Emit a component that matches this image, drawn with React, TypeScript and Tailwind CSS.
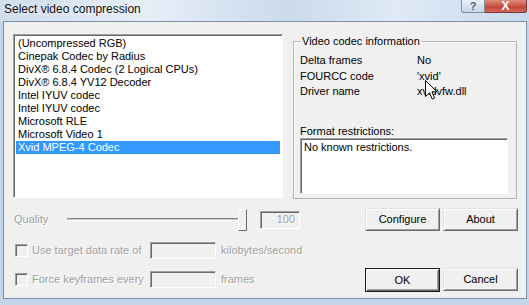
import React from 'react';

const codecs = [
  '(Uncompressed RGB)',
  'Cinepak Codec by Radius',
  'DivX® 6.8.4 Codec (2 Logical CPUs)',
  'DivX® 6.8.4 YV12 Decoder',
  'Intel IYUV codec',
  'Intel IYUV codec',
  'Microsoft RLE',
  'Microsoft Video 1',
  'Xvid MPEG-4 Codec',
];

const info = [
  ['Delta frames', 'No'],
  ['FOURCC code', "'xvid'"],
  ['Driver name', 'xvidvfw.dll'],
];

// classic sunken edit border
const sunken =
  'border border-t-[#a0a0a0] border-l-[#a0a0a0] border-r-white border-b-white shadow-[inset_1px_1px_0_#696969]';
const disabledText = 'text-[#a0a0a0] [text-shadow:1px_1px_0_#fff]';

function Button({ label, isDefault }: { label: string; isDefault?: boolean }) {
  return (
    <div
      className={
        isDefault
          ? 'w-[75px] h-[24px] flex items-center justify-center bg-[#f0f0f0] border border-[#1a1a1a] shadow-[inset_1px_1px_0_#fff,inset_-1px_-1px_0_#696969,inset_-2px_-2px_0_#a0a0a0]'
          : 'w-[75px] h-[23px] flex items-center justify-center bg-[#f0f0f0] border border-t-[#e3e3e3] border-l-[#e3e3e3] border-r-[#696969] border-b-[#696969] shadow-[inset_1px_1px_0_#fff,inset_-1px_-1px_0_#a0a0a0]'
      }
    >
      {label}
    </div>
  );
}

function Checkbox() {
  return (
    <div className="w-[13px] h-[13px] shrink-0 bg-[#f0f0f0] border border-t-[#a0a0a0] border-l-[#a0a0a0] border-r-white border-b-white shadow-[inset_1px_1px_0_#696969]"></div>
  );
}

export default function App() {
  return (
    <div className="relative w-[529px] h-[305px] overflow-hidden bg-[#c5d6ea] text-[11px] text-black font-['Liberation_Sans',Arial,sans-serif]">
      {/* title bar */}
      <div className="h-[21px] flex items-start justify-between pr-[2px] bg-[linear-gradient(90deg,#cfdcea,#e6eef8_28%,#cbdaec_55%,#e0eaf6_75%,#c8d8eb)]">
        <div className="pl-[4px] pt-[1px] text-[12px] leading-[17px] text-[#111] [text-shadow:0_0_6px_#fff]">
          Select video compression
        </div>
        <div className="flex">
          <div className="w-[24px] h-[13px] flex items-center justify-center rounded-bl-[3px] border border-t-0 border-[#7d8ea3] bg-[linear-gradient(#e9f0f8,#c9d6e6)] text-[#50627a] text-[11px] font-bold leading-none">
            ?
          </div>
          <div className="w-[42px] h-[13px] flex items-center justify-center rounded-br-[3px] border border-t-0 border-l-0 border-[#7a3a33] bg-[linear-gradient(#e08a7c,#c4483a_60%,#d0695a)] text-white text-[12px] font-bold leading-none">
            X
          </div>
        </div>
      </div>

      {/* client area */}
      <div className="ml-[3px] w-[524px] h-[278px] border border-[#7d90a8] bg-[#f0f0f0] overflow-hidden">
        <div className="mt-[12px] pl-[9px] flex items-start gap-[10px]">
          <div className={`w-[270px] h-[164px] bg-white pt-[2px] px-[2px] ${sunken}`}>
            {codecs.map((c, i) => (
              <div
                key={i}
                className={
                  i === codecs.length - 1
                    ? 'h-[13px] leading-[13px] pl-[2px] bg-[#3399ff] text-white whitespace-nowrap'
                    : 'h-[13px] leading-[13px] pl-[2px] whitespace-nowrap'
                }
              >
                {c}
              </div>
            ))}
          </div>

          <fieldset className="mt-[1px] w-[224px] h-[164px] border border-[#b4b4b4] shadow-[inset_1px_1px_0_#fff]">
            <legend className="ml-[7px] px-[1px] leading-[13px]">Video codec information</legend>
            <div className="pl-[6px] mt-[5px]">
              {info.map(([k, v]) => (
                <div key={k} className="flex leading-[15.5px]">
                  <div className="w-[117px]">{k}</div>
                  <div>{v}</div>
                </div>
              ))}
              <div className="mt-[25px] leading-[13px]">Format restrictions:</div>
              <div className={`w-[208px] h-[56px] bg-white pl-[3px] pt-[2px] leading-[13px] ${sunken}`}>
                No known restrictions.
              </div>
            </div>
          </fieldset>
        </div>

        {/* quality row */}
        <div className="mt-[9px] pl-[10px] flex items-center h-[23px]">
          <div className={`w-[53px] ${disabledText}`}>Quality</div>
          <div className="w-[180px] h-[23px] flex items-center">
            <div className="flex-1 h-[3px] border-t border-t-[#808080] border-b border-b-white bg-[#c8c8c8]"></div>
            <div className="w-[9px] h-[22px] bg-[#f0f0f0] border border-t-white border-l-white border-r-[#696969] border-b-[#696969]"></div>
          </div>
          <div className={`ml-[13px] w-[40px] h-[18px] bg-[#f0f0f0] flex items-center justify-end pr-[4px] ${sunken} ${disabledText}`}>
            100
          </div>
          <div className="ml-[65px] flex gap-[3px]">
            <Button label="Configure" />
            <Button label="About" />
          </div>
        </div>

        {/* options + dialog buttons */}
        <div className="mt-[11px] pl-[11px] flex items-start">
          <div className="w-[350px]">
            <div className="flex items-center h-[17px]">
              <Checkbox />
              <div className={`ml-[4px] w-[118px] ${disabledText}`}>Use target data rate of</div>
              <div className={`w-[66px] h-[17px] bg-[#f0f0f0] ${sunken}`}></div>
              <div className={`ml-[5px] ${disabledText}`}>kilobytes/second</div>
            </div>
            <div className="mt-[12px] flex items-center h-[17px]">
              <Checkbox />
              <div className={`ml-[4px] w-[118px] ${disabledText}`}>Force keyframes every</div>
              <div className={`w-[66px] h-[17px] bg-[#f0f0f0] ${sunken}`}></div>
              <div className={`ml-[5px] ${disabledText}`}>frames</div>
            </div>
          </div>
          <div className="mt-[26px] flex gap-[3px]">
            <Button label="OK" isDefault />
            <Button label="Cancel" />
          </div>
        </div>
      </div>

      {/* mouse pointer over the dialog */}
      <svg className="absolute left-[425px] top-[80px]" width="13" height="20" viewBox="0 0 13 20">
        <path
          d="M0.5 0.5 L0.5 16.5 L4.5 12.8 L7.2 19 L9.6 18 L7 11.8 L12 11.8 Z"
          fill="#fff"
          stroke="#000"
          strokeWidth="1"
          strokeLinejoin="miter"
        />
      </svg>
    </div>
  );
}
